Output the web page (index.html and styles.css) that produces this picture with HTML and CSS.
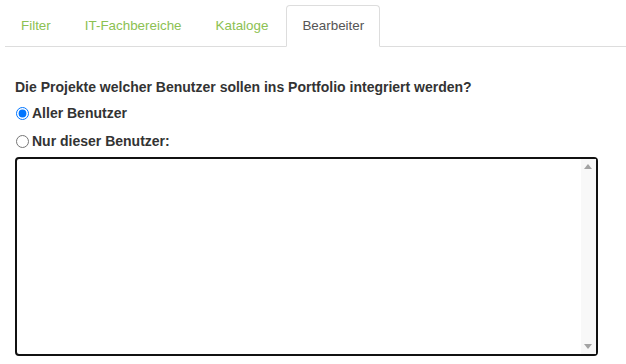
FILE: index.html
```html
<!DOCTYPE html>
<html lang="de">
  <head>
    <meta charset="UTF-8" />
    <title>Portfolio</title>
    <link rel="stylesheet" href="styles.css">
  </head>
  <body>
    <ul class="navTabs">
      <li><a href="#">Filter</a></li>
      <li><a href="#">IT-Fachbereiche</a></li>
      <li><a href="#">Kataloge</a></li>
      <li class="active"><a href="#">Bearbeiter</a></li>
    </ul>
    <div class="tabContent">
      <p class="question">Die Projekte welcher Benutzer sollen ins Portfolio integriert werden?</p>
      <label class="radioRow"><input type="radio" name="users" checked /> Aller Benutzer</label>
      <label class="radioRow last"><input type="radio" name="users" /> Nur dieser Benutzer:</label>
      <div class="listWrap">
        <textarea class="userList"></textarea>
        <div class="scrollBar">
          <span class="arrowUp"></span>
          <span class="arrowDown"></span>
        </div>
      </div>
    </div>
  </body>
</html>
```

FILE: styles.css
```css
* {
  margin: 0px;
  padding: 0px;
  box-sizing: border-box;
}
body {
  font-family: "Liberation Sans", Arial, sans-serif;
  font-size: 14px;
  line-height: 20px;
  color: #333;
  background-color: #fff;
  width: 626px;
}
.navTabs {
  list-style: none;
  display: flex;
  margin: 5px 0 0 5px;
  border-bottom: 1px solid #ddd;
}
.navTabs li {
  margin-right: 2px;
  margin-bottom: -1px;
}
.navTabs a {
  display: block;
  padding: 10px 15px;
  border: 1px solid transparent;
  border-radius: 4px 4px 0 0;
  color: #8cc152;
  font-size: 13.4px;
  text-decoration: none;
}
.navTabs .active a {
  color: #555;
  background-color: #fff;
  border-color: #ddd;
  border-bottom-color: transparent;
}
.tabContent {
  padding: 30px 0 0 15px;
}
.question {
  font-weight: bold;
  margin-bottom: 6px;
}
.radioRow {
  display: flex;
  align-items: center;
  gap: 3px;
  font-weight: bold;
  height: 20px;
  margin-bottom: 8px;
}
.radioRow.last {
  margin-bottom: 6px;
}
.radioRow input {
  width: 13px;
  height: 13px;
  margin: 0 0 0 1px;
}
.listWrap {
  position: relative;
  width: 583px;
  height: 199px;
}
.userList {
  display: block;
  width: 100%;
  height: 100%;
  border: 2px solid #111;
  border-radius: 4px;
  resize: none;
  outline: none;
}
.scrollBar {
  position: absolute;
  top: 2px;
  right: 2px;
  bottom: 2px;
  width: 15px;
  background-color: #f8f8f8;
}
.arrowUp,
.arrowDown {
  position: absolute;
  left: 3px;
  width: 0;
  height: 0;
  border-left: 4.5px solid transparent;
  border-right: 4.5px solid transparent;
}
.arrowUp {
  top: 5px;
  border-bottom: 5px solid #a3a3a3;
}
.arrowDown {
  bottom: 5px;
  border-top: 5px solid #a3a3a3;
}
```
